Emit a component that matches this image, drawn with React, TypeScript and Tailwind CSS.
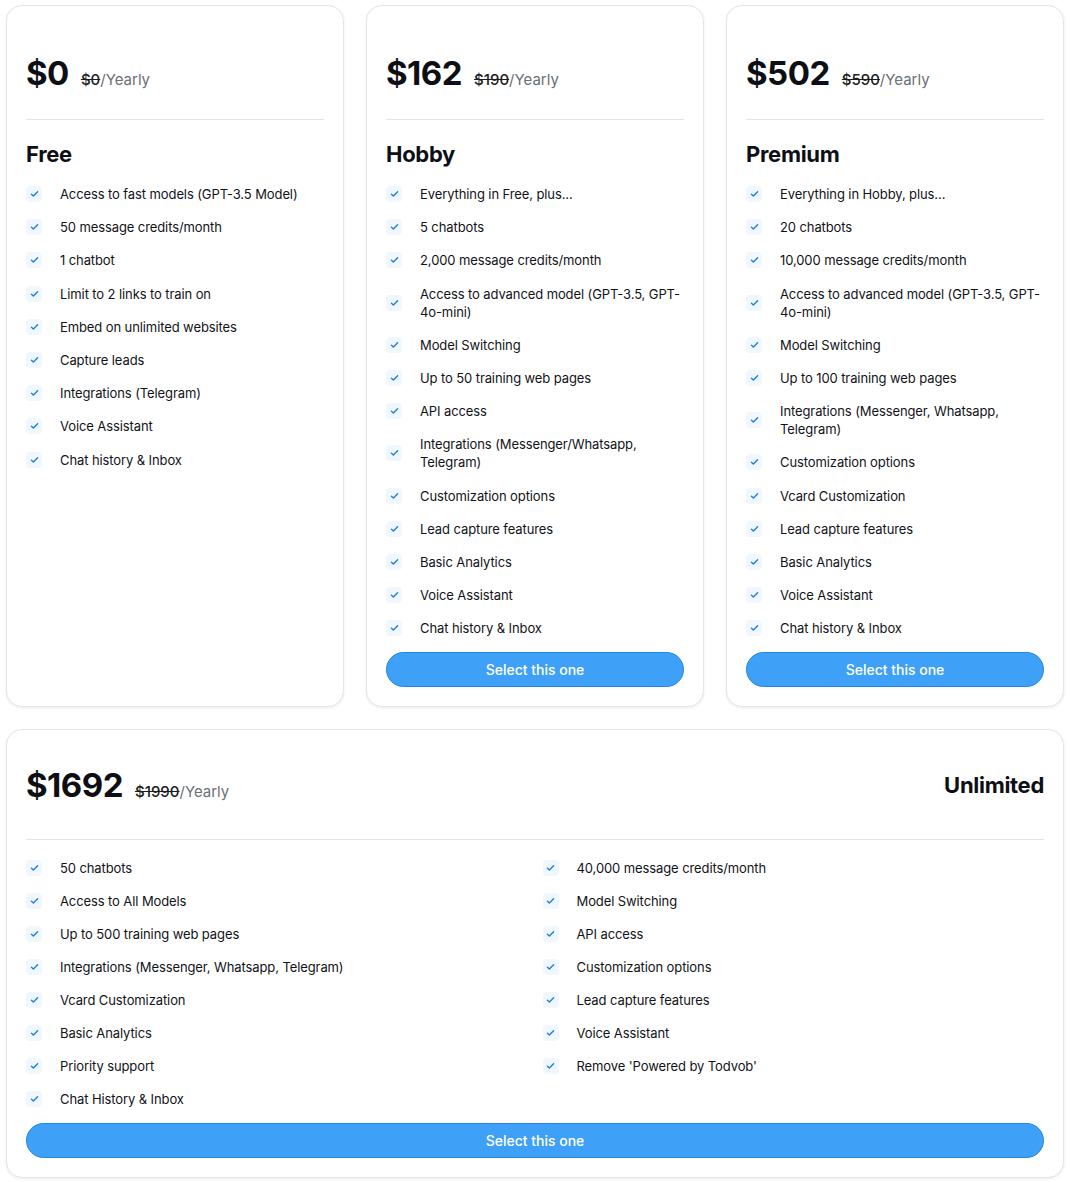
import React from "react";

const Check = () => (
  <span className="flex h-4 w-4 shrink-0 items-center justify-center rounded bg-[#f1f7fe]">
    <svg width="9" height="8" viewBox="0 0 9 8" fill="none">
      <path d="M1.4 4.3 L3.4 6.1 L7.6 1.8" stroke="#1d7fe0" strokeWidth="1.4" strokeLinecap="round" strokeLinejoin="round" />
    </svg>
  </span>
);

const Item = ({ text }: { text: string }) => (
  <li className="flex items-center gap-[18px]">
    <Check />
    <span className="text-[13px] leading-[18px] text-[#111318] tracking-[-0.1px]">{text}</span>
  </li>
);

const Price = ({ price, old }: { price: string; old: string }) => (
  <div className="flex items-baseline gap-3">
    <span className="text-[33px] font-bold leading-[40px] text-[#0d0f14] tracking-[-0.5px]">{price}</span>
    <span className="text-[15px] text-[#6b6f76]">
      <span className="line-through text-[#1a1c21] font-medium">{old}</span>/Yearly
    </span>
  </div>
);

const Button = () => (
  <button className="h-[35px] w-full rounded-full border border-[#1f86e6] bg-[#3fa0f8] text-[14px] font-medium text-white">
    Select this one
  </button>
);

type Plan = { price: string; old: string; name: string; items: string[]; button: boolean };

const plans: Plan[] = [
  {
    price: "$0",
    old: "$0",
    name: "Free",
    button: false,
    items: [
      "Access to fast models (GPT-3.5 Model)",
      "50 message credits/month",
      "1 chatbot",
      "Limit to 2 links to train on",
      "Embed on unlimited websites",
      "Capture leads",
      "Integrations (Telegram)",
      "Voice Assistant",
      "Chat history & Inbox",
    ],
  },
  {
    price: "$162",
    old: "$190",
    name: "Hobby",
    button: true,
    items: [
      "Everything in Free, plus...",
      "5 chatbots",
      "2,000 message credits/month",
      "Access to advanced model (GPT-3.5, GPT-4o-mini)",
      "Model Switching",
      "Up to 50 training web pages",
      "API access",
      "Integrations (Messenger/Whatsapp, Telegram)",
      "Customization options",
      "Lead capture features",
      "Basic Analytics",
      "Voice Assistant",
      "Chat history & Inbox",
    ],
  },
  {
    price: "$502",
    old: "$590",
    name: "Premium",
    button: true,
    items: [
      "Everything in Hobby, plus...",
      "20 chatbots",
      "10,000 message credits/month",
      "Access to advanced model (GPT-3.5, GPT-4o-mini)",
      "Model Switching",
      "Up to 100 training web pages",
      "Integrations (Messenger, Whatsapp, Telegram)",
      "Customization options",
      "Vcard Customization",
      "Lead capture features",
      "Basic Analytics",
      "Voice Assistant",
      "Chat history & Inbox",
    ],
  },
];

const leftItems = [
  "50 chatbots",
  "Access to All Models",
  "Up to 500 training web pages",
  "Integrations (Messenger, Whatsapp, Telegram)",
  "Vcard Customization",
  "Basic Analytics",
  "Priority support",
  "Chat History & Inbox",
];
const rightItems = [
  "40,000 message credits/month",
  "Model Switching",
  "API access",
  "Customization options",
  "Lead capture features",
  "Voice Assistant",
  "Remove 'Powered by Todvob'",
];

const cardCls =
  "rounded-[16px] border border-[#e4e5e8] bg-white shadow-[0_1px_3px_rgba(0,0,0,0.08)]";

export default function App() {
  return (
    <div
      className="min-h-[1182px] w-[1070px] bg-white px-[6px] pt-[5px] text-[#111]"
      style={{ fontFamily: "Inter, 'Noto Sans', sans-serif" }}
    >
      <div className="grid grid-cols-3 gap-[22px]">
        {plans.map((p) => (
          <div key={p.name} className={`${cardCls} flex flex-col px-[19px] pb-[19px] pt-[47px]`}>
            <Price price={p.price} old={p.old} />
            <div className="mt-[26px] h-px bg-[#e3e4e7]" />
            <h2 className="mt-[20px] text-[22px] font-bold leading-[28px] text-[#0d0f14] tracking-[-0.3px]">{p.name}</h2>
            <ul className="mt-[17px] flex flex-col gap-[15.2px]">
              {p.items.map((t) => (
                <Item key={t} text={t} />
              ))}
            </ul>
            {p.button && (
              <div className="mt-[15px]">
                <Button />
              </div>
            )}
          </div>
        ))}
      </div>

      <div className={`${cardCls} mt-[22px] px-[19px] pb-[19px] pt-[35px]`}>
        <div className="flex items-center justify-between">
          <Price price="$1692" old="$1990" />
          <span className="text-[22px] font-bold text-[#0d0f14] tracking-[-0.3px]">Unlimited</span>
        </div>
        <div className="mt-[34px] h-px bg-[#e3e4e7]" />
        <div className="mt-[19px] grid grid-cols-2 gap-x-[15px]">
          <ul className="flex flex-col gap-[15px]">
            {leftItems.map((t) => (
              <Item key={t} text={t} />
            ))}
          </ul>
          <ul className="flex flex-col gap-[15px]">
            {rightItems.map((t) => (
              <Item key={t} text={t} />
            ))}
          </ul>
        </div>
        <div className="mt-[15px]">
          <Button />
        </div>
      </div>
    </div>
  );
}
